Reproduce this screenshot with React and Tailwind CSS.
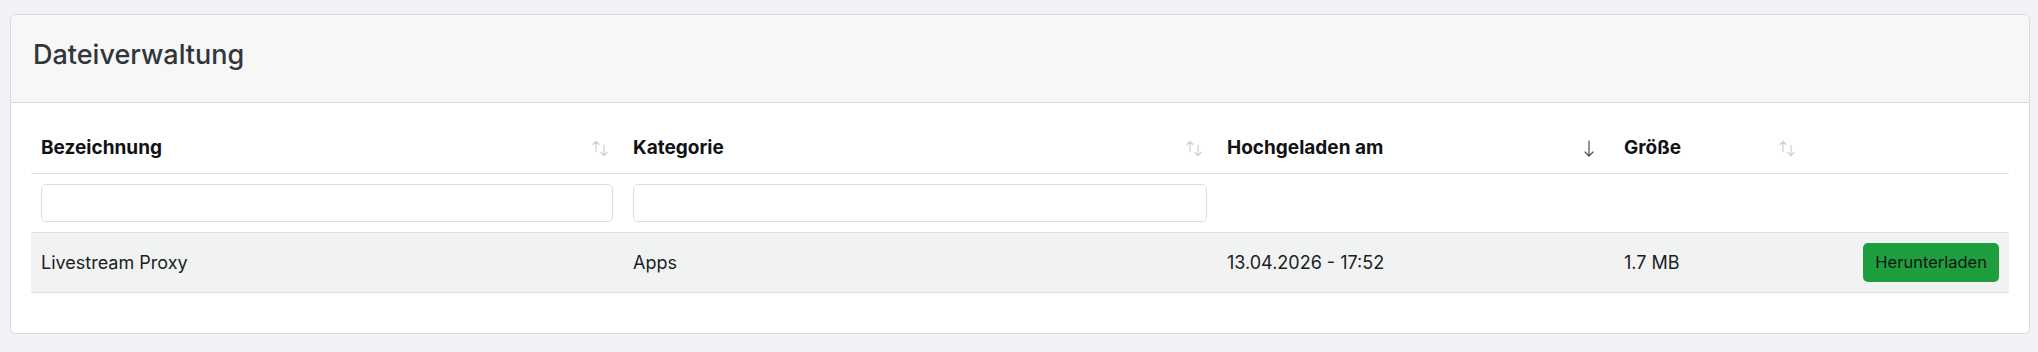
import React from "react";

function SortIcon({ className }) {
  return (
    <svg width="16" height="17" viewBox="0 0 16 17" className={className} fill="none" stroke="currentColor" strokeWidth="1.2" strokeLinecap="round" strokeLinejoin="round">
      <path d="M4 1.5v10.5M1 4.5l3-3 3 3" />
      <path d="M12 5v10.5M9 12.5l3 3 3-3" />
    </svg>
  );
}

function DownArrow({ className }) {
  return (
    <svg width="10" height="17" viewBox="0 0 10 17" className={className} fill="none" stroke="currentColor" strokeWidth="1.2" strokeLinecap="round" strokeLinejoin="round">
      <path d="M5 1v15M1 12l4 4 4-4" />
    </svg>
  );
}

const columns = [
  { label: "Bezeichnung", sort: "both" },
  { label: "Kategorie", sort: "both" },
  { label: "Hochgeladen am", sort: "desc" },
  { label: "Größe", sort: "both" },
  { label: "", sort: null },
];

const files = [
  { name: "Livestream Proxy", category: "Apps", uploaded: "13.04.2026 - 17:52", size: "1.7 MB" },
];

function App() {
  return (
    <div className="min-h-[352px] bg-[#f1f2f6] pt-[14px] pb-[19px] pl-[10px] pr-[8px] font-['Inter',sans-serif]">
      <div className="overflow-hidden rounded-[6px] border border-[#d9dadd] bg-white">
        <div className="border-b border-[#d6d7d9] bg-[#f7f7f7] pl-[22px] pt-[22px] pb-[30px]">
          <h3 className="text-[27px] font-medium leading-[35px] text-[#30363a]">Dateiverwaltung</h3>
        </div>

        <div className="p-[20px]">
          <table className="mb-[20px] w-full table-fixed border-collapse text-[18px] text-[#1b1d1f]">
            <colgroup>
              <col className="w-[592px]" />
              <col className="w-[594px]" />
              <col className="w-[397px]" />
              <col className="w-[196px]" />
              <col />
            </colgroup>
            <thead>
              <tr>
                {columns.map((c, i) => (
                  <th key={i} className="border-b border-[#dfe0e6] px-[10px] py-[11px] text-left text-[19px] font-bold leading-[28px] text-[#111214]">
                    <div className="flex items-center justify-between">
                      <span>{c.label}</span>
                      {c.sort === "both" && <SortIcon className="mr-[5px] text-[#cdcfd2]" />}
                      {c.sort === "desc" && <DownArrow className="mr-[10px] text-[#4a4c4f]" />}
                    </div>
                  </th>
                ))}
              </tr>
              <tr>
                <th className="border-b border-[#dfe0e6] p-[10px]">
                  <input type="text" className="block h-[38px] w-full rounded-[5px] border border-[#dcdde3] bg-white px-3 outline-none" />
                </th>
                <th className="border-b border-[#dfe0e6] p-[10px]">
                  <input type="text" className="block h-[38px] w-full rounded-[5px] border border-[#dcdde3] bg-white px-3 outline-none" />
                </th>
                <th className="border-b border-[#dfe0e6] p-[10px]" />
                <th className="border-b border-[#dfe0e6] p-[10px]" />
                <th className="border-b border-[#dfe0e6] p-[10px]" />
              </tr>
            </thead>
            <tbody>
              {files.map((f) => (
                <tr key={f.name} className="bg-[#f1f2f2]">
                  <td className="border-b border-[#dfe0e6] px-[10px] py-[10px] leading-[39px]">{f.name}</td>
                  <td className="border-b border-[#dfe0e6] px-[10px] py-[10px] leading-[39px]">{f.category}</td>
                  <td className="border-b border-[#dfe0e6] px-[10px] py-[10px] leading-[39px]">{f.uploaded}</td>
                  <td className="border-b border-[#dfe0e6] px-[10px] py-[10px] leading-[39px]">{f.size}</td>
                  <td className="border-b border-[#dfe0e6] px-[10px] py-[10px] text-right">
                    <button className="h-[39px] rounded-[5px] bg-[#1e9e3e] px-[12px] text-[16.5px] leading-[39px] text-[#141414]">
                      Herunterladen
                    </button>
                  </td>
                </tr>
              ))}
            </tbody>
          </table>
        </div>
      </div>
    </div>
  );
}

export default App;
